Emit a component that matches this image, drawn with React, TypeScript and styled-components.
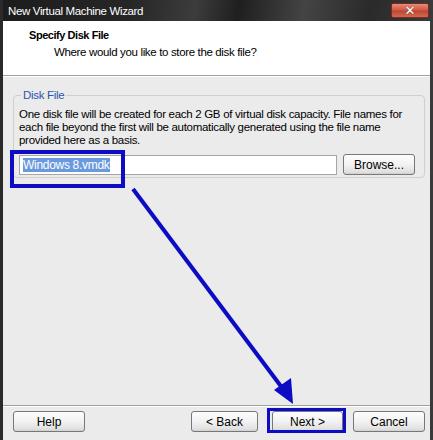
import React from "react";
import styled, { createGlobalStyle } from "styled-components";

const Global = createGlobalStyle`
  html, body { margin: 0; padding: 0; background: #ebebeb; }
  body { font-family: "Liberation Sans", Arial, sans-serif; }
`;

const Window = styled.div`
  position: relative;
  width: 433px;
  height: 440px;
  box-sizing: border-box;
  display: flex;
  flex-direction: column;
  background: #ebebeb;
  border-left: 3px solid #2a2a2a;
  border-right: 3px solid #3a3a3a;
  overflow: hidden;
`;

const TitleBar = styled.div`
  height: 21px;
  flex: none;
  display: flex;
  align-items: center;
  justify-content: space-between;
  padding: 0 3px 0 5px;
  margin: 0 -3px;
  background: linear-gradient(100deg, #1c1c1c 0%, #262626 30%, #3c3c3c 45%, #1f1f1f 55%, #444 70%, #2a2a2a 85%, #3a3a3a 100%);
  color: #fff;
  font-size: 11.5px;
`;

const TitleText = styled.span`
  padding-left: 3px;
  letter-spacing: -0.35px;
`;

const CloseButton = styled.div`
  width: 38px;
  height: 15px;
  margin-right: 1px;
  border-radius: 2px;
  background: linear-gradient(180deg, #e98a78 0%, #cf5a45 45%, #c04632 55%, #d06a55 100%);
  border: 1px solid #7a2a1e;
  box-sizing: border-box;
  display: flex;
  align-items: center;
  justify-content: center;
  color: #fff;
  font-weight: bold;
  font-size: 13px;
  font-family: "DejaVu Sans", sans-serif;
  text-shadow: 0 0 1px #333;
`;

const Header = styled.div`
  height: 55px;
  flex: none;
  background: #fff;
  border-bottom: 1px solid #a0a0a0;
  box-shadow: 0 1px 0 #fff;
  padding: 7px 0 0 26px;
  box-sizing: border-box;
`;

const HeaderTitle = styled.div`
  font-weight: bold;
  font-size: 11px;
  letter-spacing: -0.45px;
  color: #000;
  line-height: 14px;
`;

const HeaderSub = styled.div`
  font-size: 11.5px;
  letter-spacing: -0.35px;
  color: #000;
  line-height: 14px;
  margin-top: 3px;
  padding-left: 25px;
`;

const Body = styled.div`
  flex: 1;
  padding: 13px 5px 0 10px;
`;

const Group = styled.fieldset`
  margin: 0;
  padding: 4px 9px 4px 5px;
  border: 1px solid #d0d0c8;
  border-radius: 4px;
  height: 89px;
  box-sizing: border-box;
`;

const Legend = styled.legend`
  color: #2b55b0;
  font-size: 11.5px;
  letter-spacing: -0.3px;
  padding: 0 2px;
  margin-left: 2px;
`;

const Description = styled.div`
  font-size: 11.5px;
  line-height: 13px;
  color: #000;
  white-space: nowrap;
  letter-spacing: -0.3px;
  margin-top: 3px;
`;

const FileRow = styled.div`
  display: flex;
  align-items: center;
  gap: 6px;
  margin-top: 7px;
`;

const FileInput = styled.div`
  flex: 1;
  height: 20px;
  box-sizing: border-box;
  background: #fff;
  border: 1px solid #a5a5a5;
  display: flex;
  align-items: center;
  padding-left: 3px;
  font-size: 12px;
`;

const Selected = styled.span`
  background: #6a9ade;
  color: #fff;
  line-height: 14px;
  letter-spacing: -0.3px;
`;

const Button = styled.div<{ $w?: number; $ml?: number }>`
  width: ${(p) => p.$w ?? 72}px;
  margin-left: ${(p) => p.$ml ?? 0}px;
  height: 21px;
  box-sizing: border-box;
  border: 1px solid #777;
  border-radius: 3px;
  background: linear-gradient(180deg, #fdfdfd 0%, #f2f2f2 50%, #e0e0e0 90%, #cfcfcf 100%);
  display: flex;
  align-items: center;
  justify-content: center;
  font-size: 12px;
  color: #000;
  flex: none;
`;

const Footer = styled.div`
  flex: none;
  height: 35px;
  border-top: 1px solid #a0a0a0;
  box-shadow: inset 0 1px 0 #fff;
  display: flex;
  align-items: flex-start;
  padding: 5px 5px 0 10px;
  box-sizing: border-box;
`;

const Spacer = styled.div`
  flex: 1;
`;

const Overlay = styled.svg`
  position: absolute;
  left: -3px;
  top: 0;
  pointer-events: none;
`;

export default function App() {
  return (
    <>
      <Global />
      <Window>
        <TitleBar>
          <TitleText>New Virtual Machine Wizard</TitleText>
          <CloseButton>✕</CloseButton>
        </TitleBar>
        <Header>
          <HeaderTitle>Specify Disk File</HeaderTitle>
          <HeaderSub>Where would you like to store the disk file?</HeaderSub>
        </Header>
        <Body>
          <Group>
            <Legend>Disk File</Legend>
            <Description>
              One disk file will be created for each 2 GB of virtual disk capacity. File names for
              <br />
              each file beyond the first will be automatically generated using the file name
              <br />
              provided here as a basis.
            </Description>
            <FileRow>
              <FileInput>
                <Selected>Windows 8.vmdk</Selected>
              </FileInput>
              <Button $w={72}>Browse...</Button>
            </FileRow>
          </Group>
        </Body>
        <Footer>
          <Button $w={72}>Help</Button>
          <Spacer />
          <Button $w={67}>&lt; Back</Button>
          <Button $w={71} $ml={14}>Next &gt;</Button>
          <Button $w={72} $ml={10}>Cancel</Button>
        </Footer>
        <Overlay width="433" height="440" viewBox="0 0 433 440">
          <rect x="12" y="152" width="111" height="34" fill="none" stroke="#0c0cc4" strokeWidth="4" />
          <rect x="268.5" y="409.5" width="76" height="22" fill="none" stroke="#0c0cc4" strokeWidth="3" />
          <line x1="133" y1="189" x2="283" y2="389" stroke="#0c0cc4" strokeWidth="4" />
          <polygon points="293,404 274,390 291,378" fill="#0c0cc4" />
        </Overlay>
      </Window>
    </>
  );
}
